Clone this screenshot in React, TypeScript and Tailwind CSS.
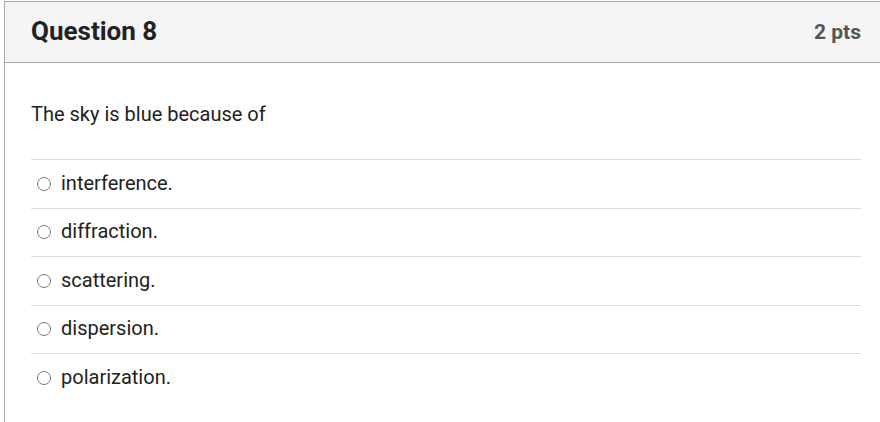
const options = ['interference.', 'diffraction.', 'scattering.', 'dispersion.', 'polarization.'];

export default function App() {
  return (
    <div className="h-[422px] w-[880px] overflow-hidden bg-white pl-1 pt-px" style={{ fontFamily: 'Roboto, "Liberation Sans", sans-serif' }}>
      <div className="h-full w-[900px] border-l border-t border-[#aaaaaa]">
        <div className="flex h-[61px] items-center justify-between border-b border-[#aaaaaa] bg-[#f5f5f5] pl-[26px] pr-[43px]">
          <h2 className="mb-[2px] text-[26px] font-bold text-[#222222]">Question 8</h2>
          <span className="mt-[2px] text-[21px] font-bold text-[#555555]">2 pts</span>
        </div>
        <div className="pl-[26px] pr-[39px]">
          <p className="pt-[36px] pb-[30px] text-[20px] text-[#222222]">The sky is blue because of</p>
          <div className="w-[830px]">
            {options.map((o) => (
              <label key={o} className="flex h-[48.5px] items-center border-t border-[#dddddd] pb-[2px] pl-[6px] text-[20px] text-[#222222]">
                <span className="mr-[10px] mt-[2px] h-[14px] w-[14px] rounded-full border border-[#777777]" />
                {o}
              </label>
            ))}
          </div>
        </div>
      </div>
    </div>
  );
}
